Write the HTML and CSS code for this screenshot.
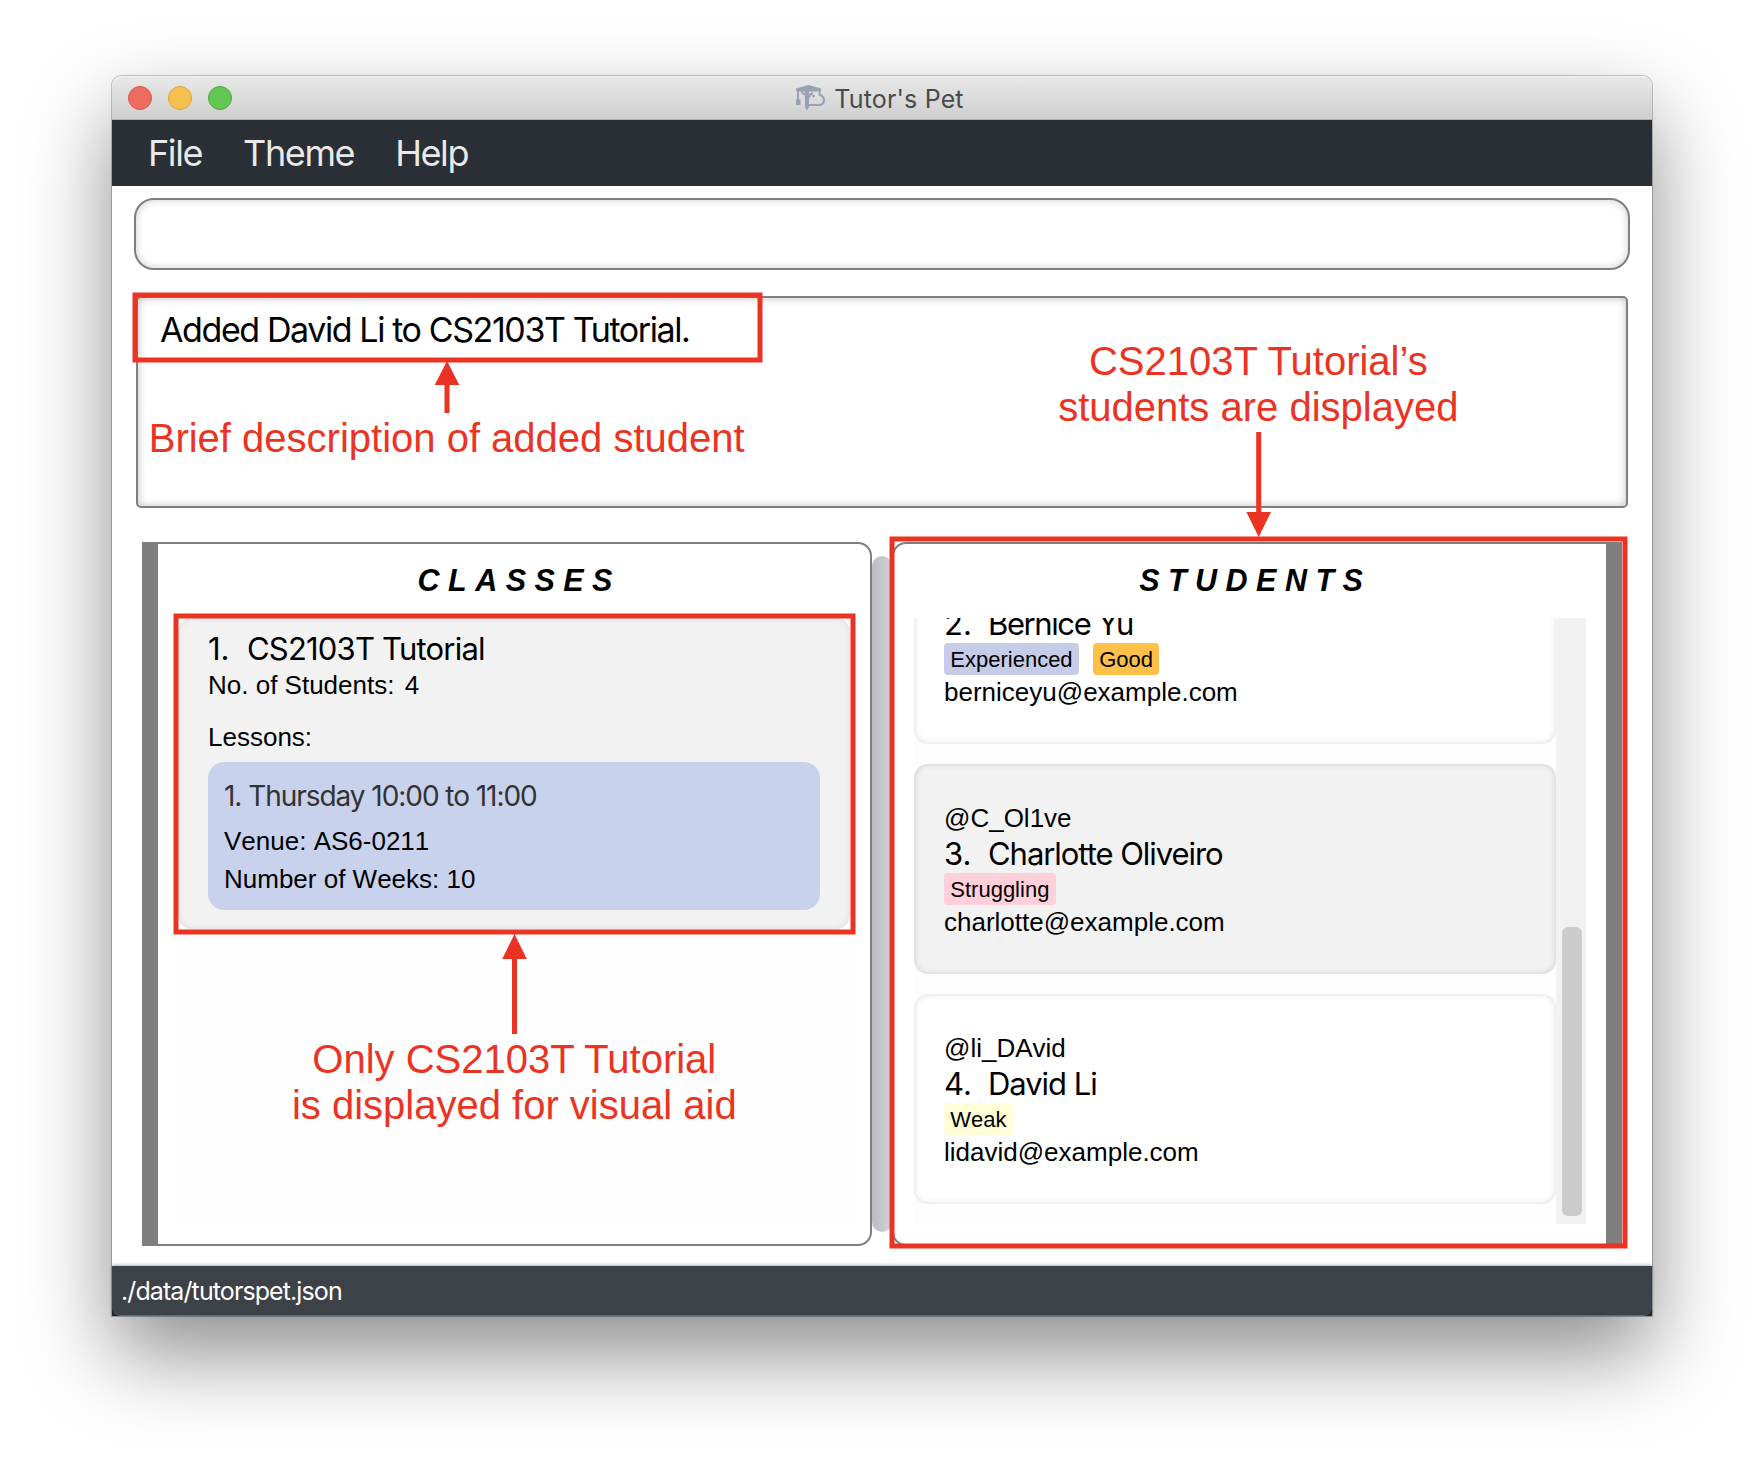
FILE: index.html
```html
<!DOCTYPE html>
<html lang="en">
<head>
<meta charset="utf-8">
<title>Tutor's Pet</title>
<link rel="stylesheet" href="styles.css">
</head>
<body>
<div class="window">
  <header class="titlebar">
    <div class="lights"><i class="light red"></i><i class="light amber"></i><i class="light green"></i></div>
    <div class="app-title">
      <svg class="logo" width="30" height="28" viewBox="0 0 30 28" fill="#97a0b5">
        <path d="M0 4.500L12.500 1L25 4.500V7L19 7.500H6L0 7Z"/>
        <path d="M1 6h2v9.500h1.500v5.500H0v-5.500h1z"/>
        <path d="M9 7h4v16l-2 3.500L9 23z"/>
        <path d="M6 7q0 3 3.500 3.500M23.500 7v3.500q4.500 2 4.500 5.500q0 5-5.500 5H12M12.500 14q1-4 4.500-5" fill="none" stroke="#97a0b5" stroke-width="2"/>
        <circle cx="17.500" cy="12" r="1.300"/>
      </svg>
      <span>Tutor's Pet</span>
    </div>
  </header>
  <nav class="menu"><span>File</span><span>Theme</span><span>Help</span></nav>
  <main class="content">
    <div class="command"></div>
    <div class="result">Added David Li to CS2103T Tutorial.</div>
    <div class="panels">
      <section class="panel classes">
        <h2>C L A S S E S</h2>
        <div class="list">
          <article class="class-card">
            <div class="name"><span class="num">1.</span><span>CS2103T Tutorial</span></div>
            <div class="count">No. of Students: <span class="n">4</span></div>
            <div class="label">Lessons:</div>
            <div class="lesson">
              <div class="slot">1. Thursday 10:00 to 11:00</div>
              <div class="venue">Venue: AS6-0211</div>
              <div>Number of Weeks: 10</div>
            </div>
          </article>
        </div>
      </section>
      <div class="divider"></div>
      <section class="panel students">
        <h2>S T U D E N T S</h2>
        <div class="scroller">
          <div class="cards">
            <article class="card scrolled">
              <div class="name"><span class="num">2.</span><span>Bernice Yu</span></div>
              <div class="tags"><span class="tag blue">Experienced</span><span class="tag orange">Good</span></div>
              <div class="email">berniceyu@example.com</div>
            </article>
            <article class="card alt">
              <div class="handle">@C_Ol1ve</div>
              <div class="name"><span class="num">3.</span><span>Charlotte Oliveiro</span></div>
              <div class="tags"><span class="tag pink">Struggling</span></div>
              <div class="email">charlotte@example.com</div>
            </article>
            <article class="card">
              <div class="handle">@li_DAvid</div>
              <div class="name"><span class="num">4.</span><span>David Li</span></div>
              <div class="tags"><span class="tag yellow">Weak</span></div>
              <div class="email">lidavid@example.com</div>
            </article>
          </div>
          <div class="track"><div class="thumb"></div></div>
        </div>
      </section>
    </div>
  </main>
  <footer class="status"><div class="path">./data/tutorspet.json</div></footer>
</div>
<svg class="notes" width="1764" height="1464" viewBox="0 0 1764 1464">
  <g class="frames">
    <rect x="135" y="295" width="625" height="65"/>
    <rect x="176" y="616" width="677" height="316"/>
    <rect x="892" y="539" width="733" height="707"/>
  </g>
  <g class="arrows">
    <path d="M447 361L459.300 385H449.500V413H444.500V385H434.700Z"/>
    <path d="M1258.700 537L1246.400 512H1256.200V432H1261.200V512H1271Z"/>
    <path d="M514.500 934L526.800 959H517V1034H512V959H502.200Z"/>
  </g>
  <g class="captions">
    <text x="446.700" y="451.500">Brief description of added student</text>
    <text x="1258.300" y="374.500">CS2103T Tutorial’s</text>
    <text x="1258.300" y="420.500">students are displayed</text>
    <text x="514.300" y="1072.500">Only CS2103T Tutorial</text>
    <text x="514.300" y="1118.500">is displayed for visual aid</text>
  </g>
</svg>
</body>
</html>
```
FILE: styles.css
```css
* { box-sizing: border-box; }
body {
  margin: 0;
  width: 1764px;
  height: 1464px;
  padding: 76px 112px 0;
  overflow: hidden;
  position: relative;
  background: #fff;
  color: #000;
  font-family: "Liberation Sans", Arial, sans-serif;
  font-size: 26px;
  font-kerning: none;
}
.window {
  width: 1540px;
  height: 1240px;
  display: flex;
  flex-direction: column;
  background: #fff;
  border-radius: 10px 10px 0 0;
  box-shadow: 0 0 0 1px rgba(0, 0, 0, .22), 0 38px 86px rgba(0, 0, 0, .45);
}
.titlebar {
  height: 44px;
  position: relative;
  display: flex;
  align-items: center;
  justify-content: center;
  background: linear-gradient(#e8e8e8, #cfcfcf);
  border-radius: 10px 10px 0 0;
  border-bottom: 1px solid #b0b0b0;
  box-shadow: inset 0 1px #f5f5f5;
}
.lights { position: absolute; left: 16px; top: 10px; display: flex; gap: 16px; }
.light { width: 24px; height: 24px; border-radius: 50%; border: 1px solid; }
.red { background: #ed6b60; border-color: #d8574c; }
.amber { background: #f5c04f; border-color: #dba53c; }
.green { background: #62c755; border-color: #50a93f; }
.app-title {
  display: flex;
  align-items: center;
  gap: 8px;
  padding: 2px 4px 0 0;
  font-family: Inter, sans-serif;
  font-size: 25px;
  letter-spacing: .15px;
  font-kerning: normal;
  color: #4a4a4a;
}
.logo { margin-bottom: 2px; }
.menu {
  height: 66px;
  display: flex;
  gap: 41px;
  padding-left: 36px;
  background: #2a2e35;
  color: #e9e9e9;
  font: 36px/66px Inter, sans-serif;
  font-kerning: normal;
  letter-spacing: -1.4px;
}
.content { flex: 1; padding: 12px 22px 0; }
.command {
  height: 72px;
  width: 1496px;
  border: 2px solid #7f7f7f;
  border-radius: 20px;
  box-shadow: inset 0 0 8px rgba(0, 0, 0, .2);
}
.result {
  margin: 26px 2px 0;
  height: 212px;
  padding: 12px 22px;
  border: 2px solid #7f7f7f;
  border-radius: 5px;
  box-shadow: inset 0 0 8px rgba(0, 0, 0, .25);
  font: 34px/40px Inter, sans-serif;
  font-kerning: normal;
  letter-spacing: -1.4px;
}
.panels { margin: 34px 8px 0; height: 704px; display: flex; align-items: stretch; }
.panel { border: 2px solid #7f7f7f; display: flex; flex-direction: column; width: 730px; }
.classes { border-left-width: 16px; border-radius: 0 14px 14px 0; }
.students { border-right-width: 16px; border-radius: 14px 0 0 14px; }
.divider { width: 20px; margin: 14px 0; border-radius: 10px; background: linear-gradient(90deg, #bbbcc0, #d2d3d7); }
h2 {
  margin: 0;
  padding: 0 0 1px 2px;
  font-size: 30.5px;
  line-height: 73px;
  font-style: italic;
  font-weight: bold;
  text-align: center;
}
.list { margin: 0 17px 0 20px; height: 606px; background: #fefefe; }
.class-card {
  height: 311px;
  width: 672px;
  padding: 11px 30px 0;
  border-radius: 14px;
  background: #f2f2f2;
  box-shadow: inset 0 0 7px rgba(0, 0, 0, .1);
}
.name { font: 31px/40px Inter, sans-serif; font-kerning: normal; letter-spacing: -1.05px; display: flex; }
.class-card .name { letter-spacing: -.8px; }
.scrolled .name { letter-spacing: -1.4px; }
.name .num, .class-card .num { width: 44px; letter-spacing: 0; }
.class-card .num { width: 39px; }
.count { line-height: 33px; }
.n { margin-left: 3px; }
.label { margin-top: 20px; line-height: 30px; }
.lesson { margin-top: 10px; height: 148px; padding: 12px 16px; border-radius: 16px; background: #c9d2ed; line-height: 30px; }
.slot { font: 28px/44px Inter, sans-serif; font-kerning: normal; letter-spacing: -1.05px; color: #333; }
.venue { line-height: 46px; }
.scroller { margin: 0 20px; height: 606px; display: flex; background: #fdfdfd; overflow: hidden; }
.cards { flex: 1; display: flex; flex-direction: column; justify-content: flex-end; gap: 20px; padding-bottom: 20px; }
.card {
  height: 210px;
  flex: none;
  padding: 39px 30px 0;
  border-radius: 14px;
  background: #fff;
  box-shadow: inset 0 0 7px rgba(0, 0, 0, .15);
}
.scrolled { padding-top: 70px; }
.alt { background: #f2f2f2; }
.handle { line-height: 31px; }
.card .name { margin-bottom: -1px; }
.tags { display: flex; gap: 14px; }
.tag { height: 32px; padding: 0 6.3px; border-radius: 4px; font-size: 22px; line-height: 33px; }
.blue { background: #c6cce8; }
.orange { background: #ffc04a; }
.pink { background: #ffd0da; }
.yellow { background: #fffed6; }
.email { line-height: 34px; }
.track { width: 30px; padding: 309px 4px 8px 6px; background: #f2f2f2; }
.thumb { height: 289px; border-radius: 6px; background: #ccc; }
.status { height: 50px; background: #24262b; box-shadow: 0 -1px 3px rgba(0, 0, 0, .3); }
.path {
  height: 50px;
  padding-left: 9px;
  border-bottom: 1px solid #66686d;
  border-radius: 0 0 9px 9px;
  background: #3d4148;
  color: #fff;
  font: 25px/50px Inter, sans-serif;
  font-kerning: normal;
  letter-spacing: -.9px;
}
.notes { position: absolute; left: 0; top: 0; font-kerning: normal; }
.frames rect { fill: none; stroke: #eb3323; stroke-width: 5; }
.arrows { fill: #eb3323; }
.captions { fill: #eb3323; font-size: 40px; text-anchor: middle; }
```
